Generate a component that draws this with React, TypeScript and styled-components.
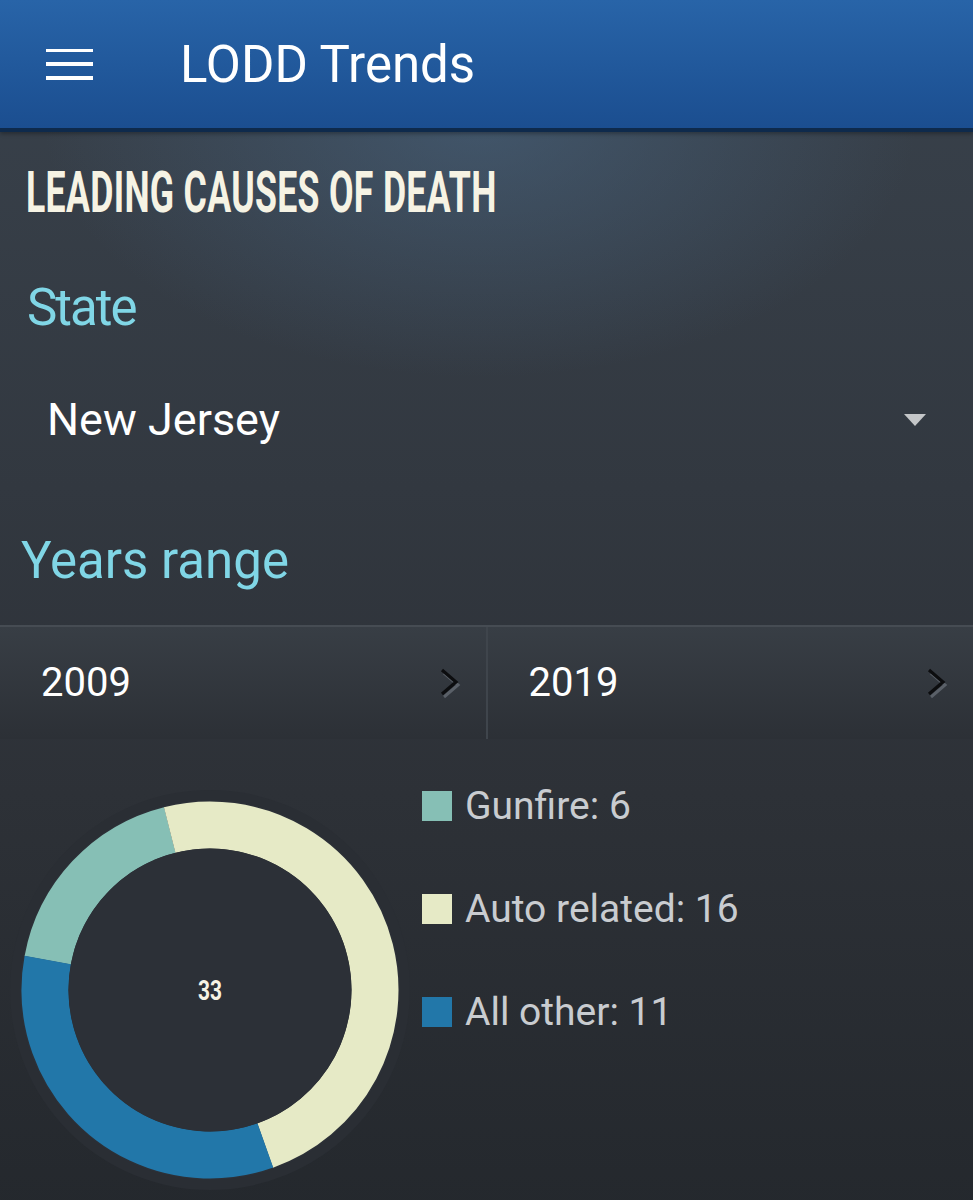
import { FC, Fragment } from "react";
import styled, { createGlobalStyle } from "styled-components";

const GlobalStyle = createGlobalStyle`
  html, body {
    margin: 0;
    padding: 0;
    background: #25292e;
  }
  body {
    font-family: Roboto, "Liberation Sans", sans-serif;
  }
`;

const Page = styled.div`
  width: 973px;
  min-height: 1200px;
  overflow: hidden;
  background: radial-gradient(ellipse 560px 330px at 480px 120px, rgba(74, 104, 134, 0.55), rgba(74, 104, 134, 0) 78%),
    linear-gradient(#39424c 0%, #323840 40%, #2d3137 65%, #24282d 100%);
`;

const Header = styled.header`
  height: 128px;
  display: flex;
  align-items: center;
  padding-left: 46px;
  background: linear-gradient(#2864a8, #1b4e90);
  border-bottom: 4px solid #0e2a4c;
  box-shadow: 0 2px 4px rgba(0, 0, 0, 0.3);
`;

const MenuButton = styled.button`
  width: 47px;
  height: 31px;
  padding: 0;
  border: none;
  background: transparent;
  display: flex;
  flex-direction: column;
  justify-content: space-between;

  span {
    display: block;
    height: 3.5px;
    background: #ffffff;
  }
`;

const AppTitle = styled.h1`
  margin: 0 0 0 87px;
  font-size: 51px;
  font-weight: 400;
  color: #ffffff;
  line-height: 1;
`;

const Content = styled.main`
  padding-top: 33px;
`;

const SectionTitle = styled.h2`
  margin: 0 0 0 26px;
  font-size: 57px;
  line-height: 56px;
  font-weight: 700;
  color: #f6f3e4;
  white-space: nowrap;
  display: inline-block;
  transform: scaleX(0.625);
  transform-origin: left center;
  letter-spacing: 0.5px;
`;

const FieldLabel = styled.div<{ $left: number; $top: number; $tight?: boolean }>`
  margin: ${(p) => p.$top}px 0 0 ${(p) => p.$left}px;
  font-size: 51px;
  line-height: 50px;
  color: #80d6e6;
  letter-spacing: ${(p) => (p.$tight ? "-2px" : "0")};
`;

const SelectRow = styled.div`
  margin-top: 65px;
  display: flex;
  align-items: center;
  justify-content: space-between;
  padding: 0 47px;
  height: 44px;
`;

const SelectValue = styled.span`
  font-size: 45px;
  line-height: 44px;
  color: #ffffff;
`;

const Caret = styled.span`
  width: 0;
  height: 0;
  border-left: 11px solid transparent;
  border-right: 11px solid transparent;
  border-top: 12px solid #c4c6c8;
`;

const YearRow = styled.div`
  margin-top: 39px;
  display: flex;
  height: 112px;
  border-top: 2px solid #464c53;
  background: linear-gradient(#383e45, #2c3036);
`;

const YearCell = styled.div`
  flex: 1;
  display: flex;
  align-items: center;
  justify-content: space-between;
  padding: 0 24px 0 41px;

  & + & {
    border-left: 2px solid #3f454c;
  }
`;

const YearValue = styled.span`
  font-size: 40px;
  line-height: 40px;
  color: #ffffff;
`;

const ChartSection = styled.section`
  display: flex;
  padding-top: 41px;
  padding-bottom: 20px;
`;

const ChartBox = styled.div`
  width: 420px;
  height: 420px;
  flex: 0 0 420px;
`;

const Legend = styled.ul`
  list-style: none;
  margin: 0 0 0 2px;
  padding: 0;
  display: flex;
  flex-direction: column;
  gap: 51px;
`;

const LegendItem = styled.li`
  display: flex;
  align-items: center;
  height: 52px;
  gap: 13px;
  font-size: 39px;
  color: #c9ccd0;
`;

const Swatch = styled.span<{ $color: string }>`
  width: 30px;
  height: 30px;
  background: ${(p) => p.$color};
`;

const causes = [
  { label: "Gunfire", value: 6, color: "#86bfb5" },
  { label: "Auto related", value: 16, color: "#e6eac6" },
  { label: "All other", value: 11, color: "#2277a9" },
];

const Chevron: FC = () => (
  <svg width="24" height="34" viewBox="0 0 24 34">
    <polyline points="5,5 19,17 5,29" fill="none" stroke="#5a6068" strokeWidth="3" transform="translate(1,2)" />
    <polyline points="4,4 18,16 4,28" fill="none" stroke="#0c0d0f" strokeWidth="3.2" />
  </svg>
);

const Donut: FC = () => {
  const r = 165;
  const c = 2 * Math.PI * r;
  const total = causes.reduce((sum, item) => sum + item.value, 0);
  // first slice starts about 80 degrees left of 12 o'clock
  let angle = -79.6 - 90;

  return (
    <svg width="420" height="420" viewBox="0 0 420 420">
      <circle cx="210" cy="210" r="200" fill="#2a2e34" />
      <circle cx="210" cy="210" r="190" fill="#2c3037" />
      {causes.map((item) => {
        const len = (item.value / total) * c;
        const rot = angle;
        angle += (item.value / total) * 360;
        return (
          <circle
            key={item.label}
            cx="210"
            cy="210"
            r={r}
            fill="none"
            stroke={item.color}
            strokeWidth="47"
            strokeDasharray={`${len} ${c}`}
            transform={`rotate(${rot} 210 210)`}
          />
        );
      })}
      <circle cx="210" cy="210" r="141.5" fill="#2c3037" />
      <text
        x="210"
        y="220"
        textAnchor="middle"
        fontFamily="Roboto, sans-serif"
        fontWeight="700"
        fontSize="28"
        fill="#f6f3e4"
        textLength="24"
        lengthAdjust="spacingAndGlyphs"
      >
        {total}
      </text>
    </svg>
  );
};

const App: FC = () => {
  return (
    <Fragment>
      <GlobalStyle />
      <Page>
        <Header>
          <MenuButton aria-label="menu">
            <span />
            <span />
            <span />
          </MenuButton>
          <AppTitle>LODD Trends</AppTitle>
        </Header>
        <Content>
          <SectionTitle>LEADING CAUSES OF DEATH</SectionTitle>
          <FieldLabel $left={27} $top={62} $tight>
            State
          </FieldLabel>
          <SelectRow>
            <SelectValue>New Jersey</SelectValue>
            <Caret />
          </SelectRow>
          <FieldLabel $left={21} $top={94}>
            Years range
          </FieldLabel>
          <YearRow>
            <YearCell>
              <YearValue>2009</YearValue>
              <Chevron />
            </YearCell>
            <YearCell>
              <YearValue>2019</YearValue>
              <Chevron />
            </YearCell>
          </YearRow>
          <ChartSection>
            <ChartBox>
              <Donut />
            </ChartBox>
            <Legend>
              {causes.map((item) => (
                <LegendItem key={item.label}>
                  <Swatch $color={item.color} />
                  {item.label}: {item.value}
                </LegendItem>
              ))}
            </Legend>
          </ChartSection>
        </Content>
      </Page>
    </Fragment>
  );
};

export default App;
